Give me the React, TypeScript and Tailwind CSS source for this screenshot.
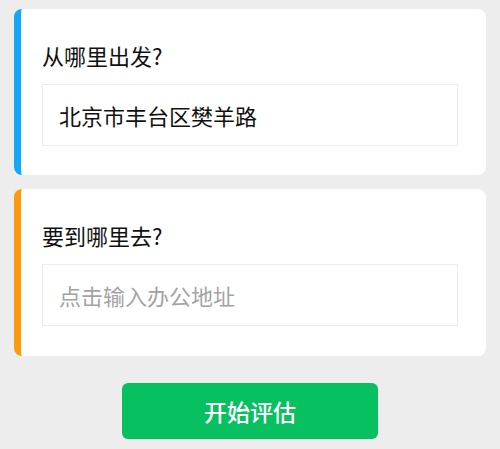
export default function App() {
  return (
    <main
      className="min-h-[449px] bg-[#ededed] px-[14px] pt-[9px]"
      style={{ fontFamily: '"Noto Sans CJK SC", "Noto Sans", sans-serif' }}
    >
      <div className="flex flex-col gap-[14px]">
        <section className="rounded-lg border-l-[7px] border-[#12a8f5] bg-white pl-[21px] pr-[28px] pt-[32px] pb-[29px]">
          <h2 className="mb-[15px] text-[22px] leading-[28px] text-[#111]">从哪里出发?</h2>
          <div className="flex h-[62px] items-center border border-[#ececec] px-4 text-[22px] text-[#111]">
            北京市丰台区樊羊路
          </div>
        </section>

        <section className="rounded-lg border-l-[7px] border-[#fb9a0e] bg-white pl-[21px] pr-[28px] pt-[32px] pb-[30px]">
          <h2 className="mb-[15px] text-[22px] leading-[28px] text-[#111]">要到哪里去?</h2>
          <div className="flex h-[62px] items-center border border-[#ececec] px-4 text-[22px] text-[#a3a3a3]">
            点击输入办公地址
          </div>
        </section>
      </div>

      <div className="mt-[27px] flex justify-center">
        <button
          type="button"
          className="h-[56px] w-[256px] rounded-md bg-[#07c160] text-[23px] font-medium text-white"
        >
          开始评估
        </button>
      </div>
    </main>
  );
}
